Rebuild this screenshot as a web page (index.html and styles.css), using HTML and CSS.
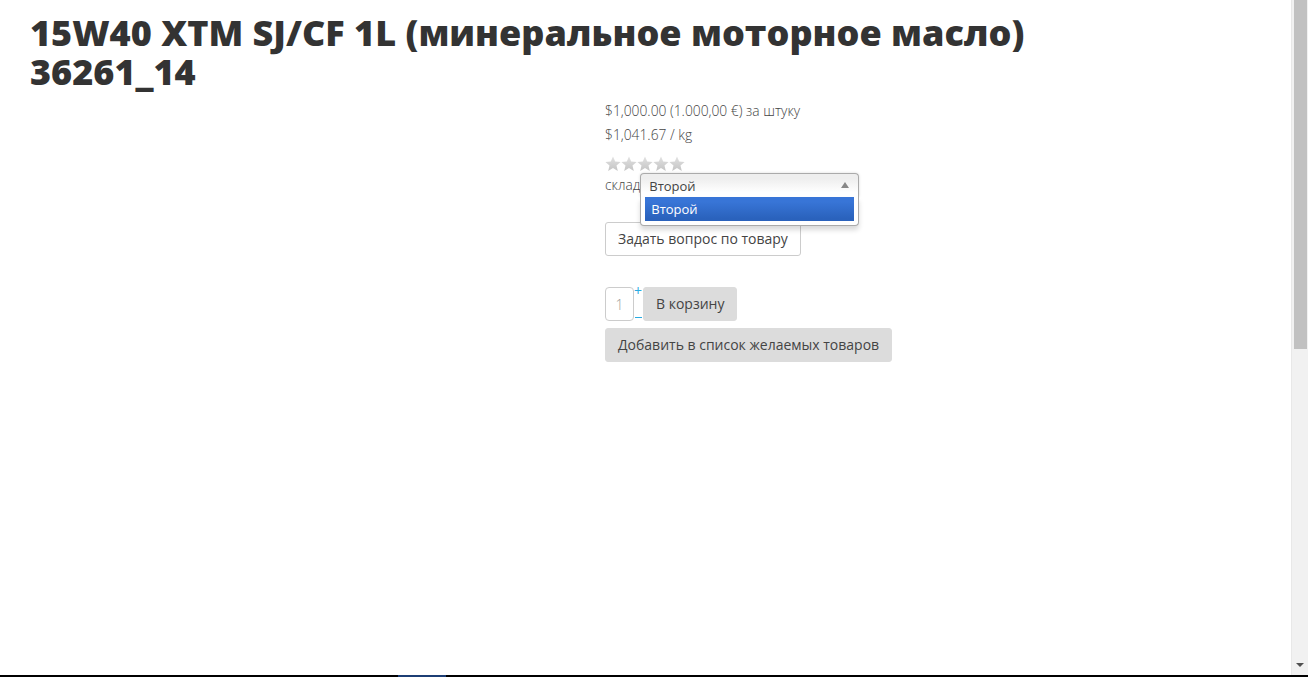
FILE: index.html
```html
<!DOCTYPE html>
<html lang="ru">
<head>
<meta charset="utf-8">
<title>15W40 XTM SJ/CF 1L</title>
<link rel="stylesheet" href="styles.css">
</head>
<body>
<div class="window">
  <main class="page">
    <h1 class="title">15W40 XTM SJ/CF 1L (минеральное моторное масло)<br>36261_14</h1>
    <div class="product">
      <div class="gallery"></div>
      <div class="info">
        <div class="price">$1,000.00 (1.000,00 €) за штуку</div>
        <div class="price">$1,041.67 / kg</div>
        <div class="stars">
          <svg class="star" viewBox="0 0 16 16"><defs><linearGradient id="sg" x1="0" y1="0" x2="0" y2="1"><stop offset="0" stop-color="#e2e2e2"/><stop offset="1" stop-color="#c4c4c4"/></linearGradient></defs><polygon points="8,0.5 10.2,5.6 15.6,5.9 11.5,9.5 12.8,15 8,12.1 3.2,15 4.5,9.5 0.4,5.9 5.8,5.6" fill="url(#sg)"/></svg>
          <svg class="star" viewBox="0 0 16 16"><polygon points="8,0.5 10.2,5.6 15.6,5.9 11.5,9.5 12.8,15 8,12.1 3.2,15 4.5,9.5 0.4,5.9 5.8,5.6" fill="url(#sg)"/></svg>
          <svg class="star" viewBox="0 0 16 16"><polygon points="8,0.5 10.2,5.6 15.6,5.9 11.5,9.5 12.8,15 8,12.1 3.2,15 4.5,9.5 0.4,5.9 5.8,5.6" fill="url(#sg)"/></svg>
          <svg class="star" viewBox="0 0 16 16"><polygon points="8,0.5 10.2,5.6 15.6,5.9 11.5,9.5 12.8,15 8,12.1 3.2,15 4.5,9.5 0.4,5.9 5.8,5.6" fill="url(#sg)"/></svg>
          <svg class="star" viewBox="0 0 16 16"><polygon points="8,0.5 10.2,5.6 15.6,5.9 11.5,9.5 12.8,15 8,12.1 3.2,15 4.5,9.5 0.4,5.9 5.8,5.6" fill="url(#sg)"/></svg>
        </div>
        <div class="stock">
          <span class="stock-label">склад</span>
          <div class="chosen">
            <div class="chosen-single"><span>Второй</span><span class="chosen-arrow"></span></div>
            <div class="chosen-drop">
              <ul class="chosen-results">
                <li class="highlighted">Второй</li>
              </ul>
            </div>
          </div>
        </div>
        <div class="ask-row"><button class="btn btn-outline">Задать вопрос по товару</button></div>
        <div class="cart-row">
          <div class="qty">1</div>
          <div class="qty-ctrl"><span class="plus">+</span><span class="minus"></span></div>
          <button class="btn btn-grey">В корзину</button>
        </div>
        <div class="wish-row"><button class="btn btn-grey">Добавить в список желаемых товаров</button></div>
      </div>
    </div>
  </main>
  <div class="scrollbar">
    <div class="thumb"></div>
    <div class="track"></div>
    <div class="arrow-down"></div>
  </div>
  <div class="taskbar"><div class="task-item"></div></div>
</div>
</body>
</html>
```
FILE: styles.css
```css
* { box-sizing: border-box; }
html, body { margin: 0; padding: 0; }
body {
  width: 1308px;
  height: 677px;
  overflow: hidden;
  background: #fff;
  font-family: "Open Sans", "Noto Sans", sans-serif;
  color: #333;
}
.window {
  display: grid;
  grid-template-columns: 1fr 17px;
  grid-template-rows: 1fr 2px;
  height: 677px;
}
.page {
  grid-column: 1;
  grid-row: 1;
  padding: 13px 0 0 30px;
  overflow: hidden;
}
.title {
  margin: 0;
  font-size: 36px;
  line-height: 39px;
  font-weight: 800;
  color: #333;
}
.product {
  display: grid;
  grid-template-columns: 575px 1fr;
  margin-top: 8px;
}
.info {
  font-size: 13px;
  color: #555;
}
.price {
  line-height: 24px;
  font-size: 13.8px;
  font-weight: 300;
  color: #444;
}
.stars {
  display: flex;
  margin-top: 9px;
  height: 16px;
}
.star {
  width: 16px;
  height: 16px;
  display: block;
}
.stock {
  display: flex;
  align-items: center;
  height: 24px;
  margin-top: 1px;
}
.stock-label {
  line-height: 24px;
  font-weight: 300;
  font-size: 13.8px;
  color: #444;
}
.chosen {
  position: relative;
  width: 219px;
  height: 24px;
  font-size: 13px;
}
.chosen-single {
  display: flex;
  align-items: center;
  justify-content: space-between;
  height: 24px;
  padding: 0 8px 0 8px;
  border: 1px solid #aaa;
  border-bottom: 0;
  border-radius: 4px 4px 0 0;
  background: linear-gradient(#eee 20%, #fff 80%);
  color: #444;
  box-shadow: 0 0 3px rgba(0,0,0,0.15);
}
.chosen-arrow {
  width: 0;
  height: 0;
  border-left: 4px solid transparent;
  border-right: 4px solid transparent;
  border-bottom: 6px solid #888;
  margin-right: 1px;
  margin-top: -2px;
}
.chosen-drop {
  position: absolute;
  top: 100%;
  left: 0;
  right: 0;
  z-index: 10;
  background: #fff;
  border: 1px solid #aaa;
  border-top: 0;
  border-radius: 0 0 4px 4px;
  box-shadow: 0 4px 5px rgba(0,0,0,0.15);
}
.chosen-results {
  list-style: none;
  margin: 0 4px 4px 0;
  padding: 0 0 0 4px;
}
.chosen-results li {
  padding: 0 6px;
  line-height: 24px;
  height: 24px;
  color: #fff;
}
.chosen-results li.highlighted {
  background-color: #3875d7;
  background-image: linear-gradient(#3875d7 20%, #2a62bc 90%);
}
.btn {
  font-family: "Open Sans", "Noto Sans", sans-serif;
  font-size: 14px;
  line-height: 20px;
  padding: 6px 12px;
  border-radius: 3px;
  color: #444;
  cursor: pointer;
}
.btn-outline {
  background: #fff;
  border: 1px solid #ccc;
}
.btn-grey {
  background: #dcdcdc;
  border: 1px solid #dcdcdc;
}
.ask-row {
  margin-top: 25px;
  display: flex;
}
.cart-row {
  display: flex;
  margin-top: 31px;
  height: 34px;
}
.qty {
  width: 29px;
  height: 34px;
  border: 1px solid #ccc;
  border-radius: 4px;
  display: flex;
  align-items: center;
  justify-content: center;
  font-size: 14px;
  font-weight: 300;
  color: #999;
}
.qty-ctrl {
  display: flex;
  flex-direction: column;
  justify-content: space-between;
  align-items: flex-start;
  width: 9px;
  color: #29abe2;
  font-size: 14px;
  line-height: 10px;
  margin-top: -1px;
  padding-bottom: 3px;
}
.qty-ctrl .minus {
  display: block;
  width: 7px;
  height: 1px;
  background: #29abe2;
  margin-left: 1px;
}
.wish-row {
  display: flex;
  margin-top: 7px;
}
.scrollbar {
  grid-column: 2;
  grid-row: 1;
  display: flex;
  flex-direction: column;
  align-items: center;
  background: #f1f1f1;
  border-left: 1px solid #e8e8e8;
}
.thumb {
  width: 13px;
  height: 349px;
  background: #c1c1c1;
}
.track {
  flex: 1;
}
.arrow-down {
  width: 0;
  height: 0;
  border-left: 4px solid transparent;
  border-right: 4px solid transparent;
  border-top: 4px solid #505050;
  margin-bottom: 8px;
}
.taskbar {
  grid-column: 1 / 3;
  grid-row: 2;
  background: #000;
  display: flex;
}
.task-item {
  margin-left: 398px;
  width: 48px;
  background: #1c3d74;
}
```
